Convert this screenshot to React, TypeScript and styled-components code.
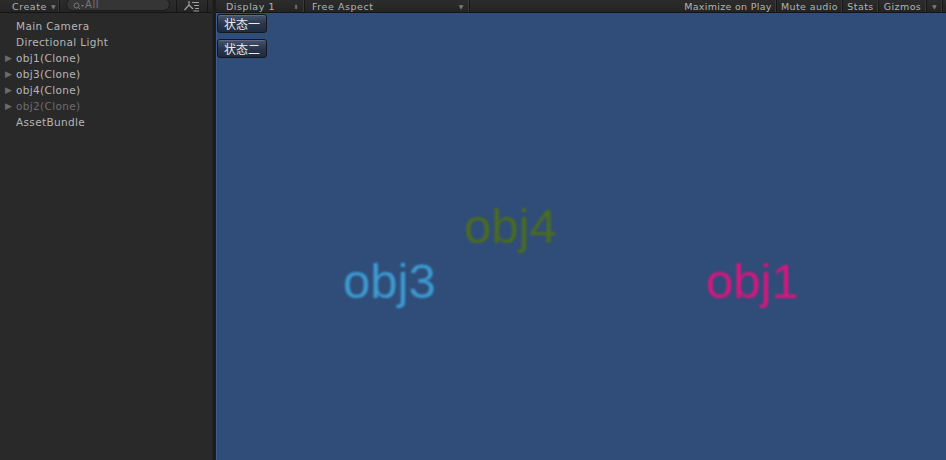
import React from "react";
import styled, { createGlobalStyle } from "styled-components";

const Global = createGlobalStyle`
  html, body { margin: 0; padding: 0; background: #292929; }
  body { width: 946px; height: 460px; overflow: hidden; }
`;

const Root = styled.div`
  display: flex;
  width: 946px;
  height: 460px;
  font-family: "DejaVu Sans", Verdana, sans-serif;
  background: #292929;
`;

const HierarchyPanel = styled.div`
  width: 212px;
  display: flex;
  flex-direction: column;
  background: #292929;
`;

const Splitter = styled.div`
  width: 4px;
  box-sizing: border-box;
  background: #1c1c1c;
  border-left: 1px solid #222;
`;

const GamePanel = styled.div`
  flex: 1;
  display: flex;
  flex-direction: column;
`;

const Toolbar = styled.div`
  height: 12px;
  display: flex;
  align-items: center;
  background: linear-gradient(#2c2c2c, #242424);
  border-bottom: 1px solid #151515;
  font-size: 9.5px;
  color: #b4b4b4;
  letter-spacing: 0.55px;
  flex-shrink: 0;
`;

const ToolItem = styled.div<{ $w?: number; $pl?: number; $center?: boolean; $ls?: number }>`
  display: flex;
  align-items: center;
  height: 100%;
  padding-left: ${(p) => (p.$center ? 0 : p.$pl ?? 5)}px;
  padding-right: ${(p) => (p.$center ? 0 : 5)}px;
  width: ${(p) => (p.$w ? `${p.$w}px` : "auto")};
  box-sizing: border-box;
  border-right: 1px solid #161616;
  box-shadow: inset -1px 0 0 #3a3a3a;
  white-space: nowrap;
  letter-spacing: ${(p) => p.$ls ?? 0.55}px;
  justify-content: ${(p) => (p.$center ? "center" : "space-between")};
`;

const Spacer = styled.div<{ $w?: number }>`
  flex: ${(p) => (p.$w ? `0 0 ${p.$w}px` : "1")};
  height: 100%;
`;

const Caret = styled.span<{ $ml?: number }>`
  font-size: 6px;
  color: #7a7a7a;
  margin-left: ${(p) => p.$ml ?? 4}px;
`;

const SearchField = styled.div`
  margin-left: 6px;
  width: 104px;
  height: 13px;
  margin-top: -3px;
  border-radius: 8px;
  background: #353535;
  border: 1px solid #1a1a1a;
  display: flex;
  align-items: flex-end;
  padding-left: 6px;
  box-sizing: border-box;
  color: #777;
  font-size: 10px;
  line-height: 10px;
  gap: 1px;
`;

const FilterIcon = styled.div`
  margin-left: auto;
  width: 30px;
  height: 100%;
  display: flex;
  align-items: center;
  justify-content: center;
  border-left: 1px solid #161616;
  border-right: 1px solid #161616;
  margin-right: 4px;
`;

const List = styled.div`
  padding-top: 5px;
  display: flex;
  flex-direction: column;
`;

const Row = styled.div<{ $disabled?: boolean }>`
  height: 16px;
  display: flex;
  align-items: center;
  padding-left: 5px;
  font-size: 10.5px;
  letter-spacing: 0.35px;
  color: ${(p) => (p.$disabled ? "#6c6c6c" : "#b6b6b6")};
`;

const Arrow = styled.span<{ $show?: boolean }>`
  width: 11px;
  font-size: 9px;
  color: #6a6a6a;
  visibility: ${(p) => (p.$show ? "visible" : "hidden")};
`;

const Viewport = styled.div`
  flex: 1;
  background: #2f4d78;
  border-left: 1px solid #3d5d8a;
  position: relative;
  overflow: hidden;
`;

const ButtonStack = styled.div`
  display: flex;
  flex-direction: column;
  gap: 6px;
  padding: 1px 0 0 0;
  align-items: flex-start;
`;

const StateButton = styled.button`
  width: 50px;
  height: 19px;
  padding: 0;
  border-radius: 3px;
  border: 1px solid #121820;
  background: linear-gradient(#46556e, #2a374d 50%, #1f2b3d);
  box-shadow: inset 0 1px 0 rgba(255, 255, 255, 0.14);
  color: #ececec;
  font-family: "Noto Sans CJK SC", sans-serif;
  font-size: 12px;
  line-height: 17px;
`;

const WorldText = styled.div<{ $x: number; $y: number; $c: string }>`
  position: absolute;
  left: ${(p) => p.$x}px;
  top: ${(p) => p.$y}px;
  color: ${(p) => p.$c};
  font-family: "Liberation Sans", Arial, sans-serif;
  font-size: 49px;
  line-height: 1;
  filter: blur(0.9px);
`;

export default function App() {
  return (
    <>
      <Global />
      <Root>
        <HierarchyPanel>
          <Toolbar>
            <ToolItem $pl={12} $w={60}>
              Create<Caret>▼</Caret>
            </ToolItem>
            <SearchField>
              <svg width="11" height="8" viewBox="0 0 11 8">
                <circle cx="3.5" cy="3.5" r="2.5" fill="none" stroke="#777" strokeWidth="1" />
                <line x1="5.3" y1="5.3" x2="7" y2="7" stroke="#777" strokeWidth="1" />
                <path d="M8 3 L11 3 L9.5 5 Z" fill="#777" />
              </svg>
              All
            </SearchField>
            <FilterIcon>
              <svg width="16" height="11" viewBox="0 0 16 11">
                <path d="M5 0 V4 L0.5 9 M5 4 L9 8" stroke="#a0a0a0" strokeWidth="1.2" fill="none" />
                <path d="M8 1.5 H15 M10 4.5 H15 M11 7.5 H15 M9.5 10 H15" stroke="#a0a0a0" strokeWidth="1" />
              </svg>
            </FilterIcon>
          </Toolbar>
          <List>
            <Row><Arrow />Main Camera</Row>
            <Row><Arrow />Directional Light</Row>
            <Row><Arrow $show>▶</Arrow>obj1(Clone)</Row>
            <Row><Arrow $show>▶</Arrow>obj3(Clone)</Row>
            <Row><Arrow $show>▶</Arrow>obj4(Clone)</Row>
            <Row $disabled><Arrow $show>▶</Arrow>obj2(Clone)</Row>
            <Row><Arrow />AssetBundle</Row>
          </List>
        </HierarchyPanel>
        <Splitter />
        <GamePanel>
          <Toolbar>
            <ToolItem $pl={10} $w={89}>
              Display 1<Caret>⬍</Caret>
            </ToolItem>
            <ToolItem $pl={7} $w={165}>
              Free Aspect<Caret>▼</Caret>
            </ToolItem>
            <Spacer />
            <ToolItem $w={97} $center $ls={0.3}>Maximize on Play</ToolItem>
            <ToolItem $w={66} $center $ls={0.4}>Mute audio</ToolItem>
            <ToolItem $w={36} $center $ls={0.4}>Stats</ToolItem>
            <ToolItem $w={48} $center $ls={0.4}>Gizmos</ToolItem>
            <ToolItem $w={16} $center><Caret $ml={0}>▼</Caret></ToolItem>
            <Spacer $w={3} />
          </Toolbar>
          <Viewport>
            <ButtonStack>
              <StateButton>状态一</StateButton>
              <StateButton>状态二</StateButton>
            </ButtonStack>
            <WorldText $x={247} $y={189} $c="#4b6b22">obj4</WorldText>
            <WorldText $x={126} $y={244} $c="#3d9bd2">obj3</WorldText>
            <WorldText $x={489} $y={244} $c="#d8167f">obj1</WorldText>
          </Viewport>
        </GamePanel>
      </Root>
    </>
  );
}
